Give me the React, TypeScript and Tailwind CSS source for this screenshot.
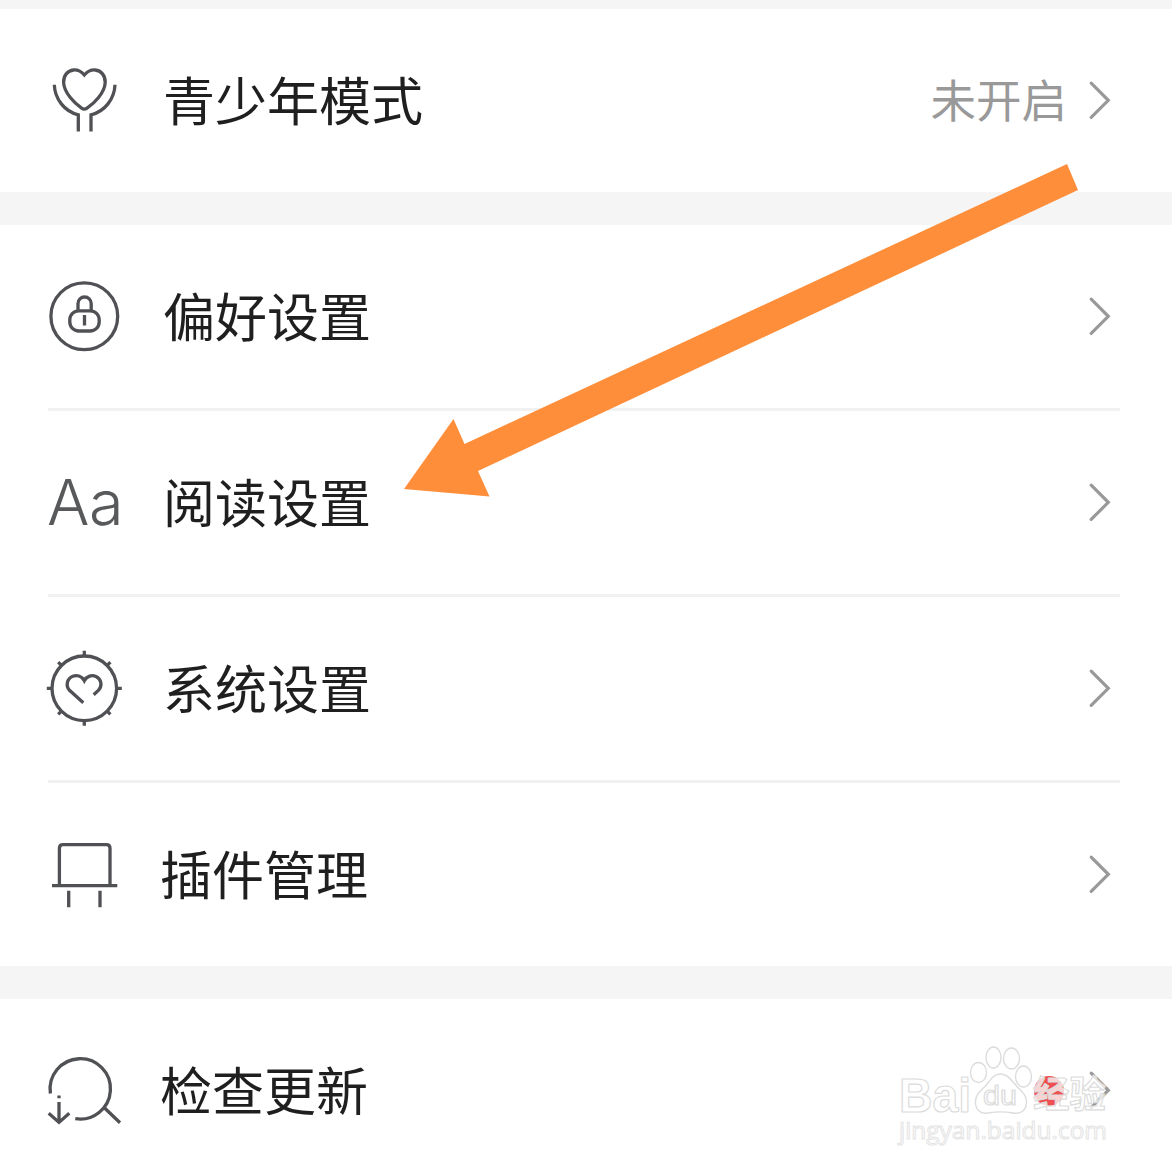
import React from 'react';

function TeenIcon() {
  return (
    <>
      <path d="M40.3 15C36.5 10.5 32.5 9.8 29.5 10C23.5 10.6 19.4 15.5 19.6 22.5C20 33 31 43.5 37.6 48.2Q40.3 50 43 48.2C50 43.5 60.8 33 61.2 22.5C61.4 15.5 57.2 10.6 51.2 10C48.2 9.8 44.2 10.5 40.3 15Z" />
      <path d="M10.3 24.8C10.8 39 20.5 51.5 34.3 54.8V71.5" />
      <path d="M71 24.8C70.5 39 60.8 51.5 47 54.8V71.5" />
    </>
  );
}

function PreferenceIcon() {
  return (
    <>
      <circle cx="40.3" cy="40.2" r="33.4" />
      <rect x="25.8" y="34.8" width="29.4" height="20.2" rx="9" />
      <path d="M34 35V27.6a6.6 6.6 0 0 1 13.2 0V35M40.5 39v10.5" />
    </>
  );
}

function SystemIcon() {
  return (
    <>
      <circle cx="40.3" cy="40.3" r="32.3" />
      <path d="M40.3 8V2.8M40.3 72.6v5.2M8 40.3H2.8M72.6 40.3h5.2M17.4 17.4l-3.2-3.2M63.2 17.4l3.2-3.2M17.4 63.2l-3.2 3.2M63.2 63.2l3.2 3.2" />
      <path d="M39.3 54.7L25.5 42.3C21.5 38 22.8 30.5 28.8 28.2C33.5 26.7 38 28.5 40.3 32.7C42.8 28 47.8 26.6 52 28.5C57.5 31 58.5 38 54.6 42.2L49.7 46.8" />
    </>
  );
}

function PluginIcon() {
  return (
    <>
      <path d="M15.4 51.7V14.2Q15.4 10.6 19 10.6H62.4Q66 10.6 66 14.2V51.7" />
      <path d="M8 51.7H73.3M24.7 56.7V73.3M56 56.7V73.3" />
    </>
  );
}

function UpdateIcon() {
  return (
    <>
      <path d="M6.4 43.5A30.2 30.2 0 1 1 31.3 68.7" />
      <path d="M59.3 56.7L76 72.7M15 45.5v2.8M15 52v20M4.7 63.3L15 72.4L25.3 63.3" />
    </>
  );
}

interface RowProps {
  label: string;
  icon?: React.ReactNode;
  status?: string;
  shifted?: boolean;
}

function SettingRow({ label, icon, status, shifted }: RowProps) {
  return (
    <div className="flex items-center h-[183px] pl-[44px] pr-[60px]">
      {icon ? (
        <svg className="w-[80px] h-[81px] shrink-0" viewBox="0 0 80 81" fill="none" stroke="#505154" strokeWidth="3.3">
          {icon}
        </svg>
      ) : (
        <span className="w-[80px] shrink-0 pl-[3px] font-['Inter'] font-light text-[63px] tracking-[-0.5px] leading-none text-[#58595b] whitespace-nowrap">
          Aa
        </span>
      )}
      <span className={`${shifted ? 'ml-[36px]' : 'ml-[39px]'} pb-[3px] text-[52px] leading-[76px] text-[#1f1f1f] whitespace-nowrap`}>{label}</span>
      <span className="ml-auto mr-[21px] pb-[6px] text-[45.5px] leading-[66px] text-[#999999]">{status}</span>
      <svg className="w-6 h-[41px] shrink-0" viewBox="0 0 24 41" fill="none" stroke="#999999" strokeWidth="3.2" strokeLinecap="round">
        <path d="M3.2 3.2L20.3 20.3L3.2 37.4" />
      </svg>
    </div>
  );
}

function Divider() {
  return <div className="h-[3px] ml-[48px] mr-[52px] bg-[#f1f1f1]" />;
}

function Watermark() {
  return (
    <svg className="absolute left-[890px] top-[1036px] w-[230px] h-[120px]" viewBox="890 1036 230 120">
      <g fill="#ffffff" fillOpacity="0.75" stroke="#dcdcdc" strokeWidth="1.4">
        <ellipse cx="978.5" cy="1072.5" rx="8" ry="10" />
        <ellipse cx="993.5" cy="1057.5" rx="7.5" ry="10.5" />
        <ellipse cx="1011.5" cy="1058.5" rx="8" ry="10.5" />
        <ellipse cx="1023.5" cy="1076.5" rx="8" ry="10.5" />
        <path d="M1000.5 1074C993 1074 990 1081 985.5 1086C980 1091 974.5 1096 975.5 1104C976.5 1111 981 1114 988 1113C996 1111.5 1005 1111.5 1013 1113C1021 1114.5 1026 1110 1026.5 1103C1027 1095 1021 1091 1016.5 1086C1012 1081 1008 1074 1000.5 1074Z" />
      </g>
      <circle cx="1049" cy="1091" r="15" fill="#ee4f51" />
      <g fill="#ffffff" fillOpacity="0.75" stroke="#dcdcdc" strokeWidth="1.2" strokeLinejoin="round">
        <text x="899" y="1112" textLength="72" lengthAdjust="spacingAndGlyphs" fontSize="48" fontWeight="bold" fontFamily="Liberation Sans, sans-serif">Bai</text>
        <text x="983" y="1105" textLength="34" lengthAdjust="spacingAndGlyphs" fontSize="27" fontFamily="Liberation Sans, sans-serif">du</text>
        <text x="1033" y="1108" textLength="73" lengthAdjust="spacingAndGlyphs" fontSize="37" fontWeight="bold" fontFamily="Noto Sans CJK SC, sans-serif">经验</text>
        <text x="899" y="1139" textLength="208" lengthAdjust="spacingAndGlyphs" fontSize="24" stroke="#e4e4e4" strokeWidth="1" fontFamily="Open Sans, sans-serif">jingyan.baidu.com</text>
      </g>
    </svg>
  );
}

export default function App() {
  return (
    <div className="relative w-[1172px] h-[1172px] overflow-hidden bg-[#f5f5f5] pt-[9px] font-['Noto_Sans_CJK_SC',sans-serif]">
      <section className="bg-white">
        <SettingRow label="青少年模式" icon={<TeenIcon />} status="未开启" />
      </section>

      <section className="bg-white mt-[33px]">
        <SettingRow label="偏好设置" icon={<PreferenceIcon />} />
        <Divider />
        <SettingRow label="阅读设置" />
        <Divider />
        <SettingRow label="系统设置" icon={<SystemIcon />} />
        <Divider />
        <SettingRow label="插件管理" icon={<PluginIcon />} shifted />
      </section>

      <section className="bg-white mt-[33px]">
        <SettingRow label="检查更新" icon={<UpdateIcon />} shifted />
      </section>

      {/* Pointer to the reading settings entry */}
      <svg className="absolute left-[400px] top-[160px] w-[682px] h-[340px]" viewBox="400 160 682 340">
        <path d="M404 489L453.5 419L464.5 444L1067 164L1078 190L478 471L489.5 496.5Z" fill="#ff8e3a" />
      </svg>

      <Watermark />
    </div>
  );
}
